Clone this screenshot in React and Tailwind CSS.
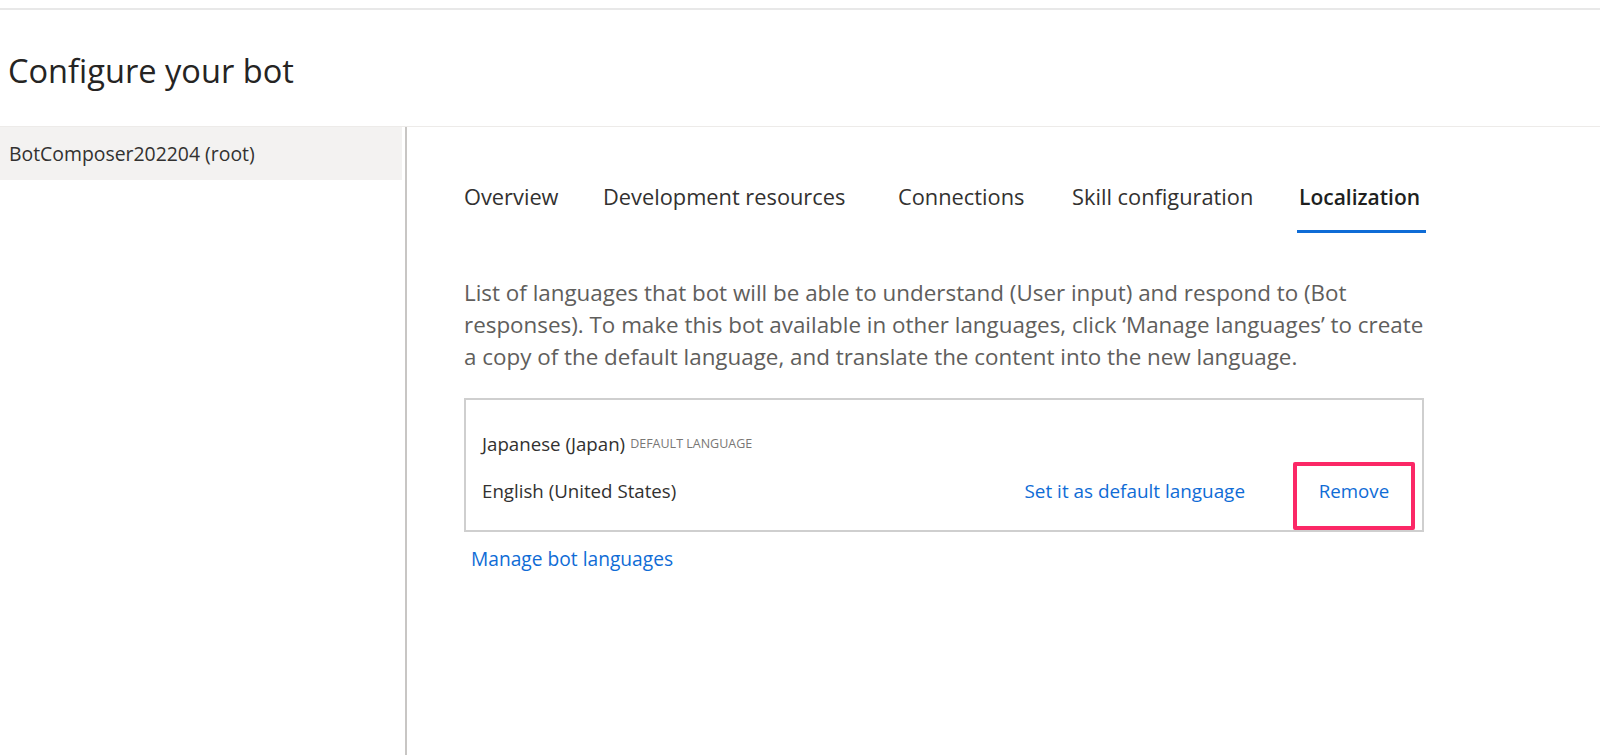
import React from 'react';

const tabs = [
    { label: 'Overview', w: 'w-[139px]' },
    { label: 'Development resources', w: 'w-[295px]' },
    { label: 'Connections', w: 'w-[174px]' },
    { label: 'Skill configuration', w: 'w-[227px]' },
    { label: 'Localization', w: 'w-[129px]', active: true },
];

const App = () => {
    return (
        <div className="h-[755px] w-full overflow-hidden bg-white font-['Open_Sans',sans-serif] text-[#323130]">
            <div className="h-[8px]" />
            {/* header */}
            <div className="flex h-[119px] items-center border-t-2 border-b border-t-[#e8e8e8] border-b-[#edebe9] px-[8px]">
                <h1 className="pt-[6px] text-[32.6px] font-medium text-[#252423]">Configure your bot</h1>
            </div>

            <div className="flex h-[628px]">
                {/* sidebar */}
                <div className="w-[407px] shrink-0 border-r-2 border-[#c8c6c4]">
                    <div className="mr-[3px] flex h-[53px] items-center bg-[#f3f2f1] px-[9px] text-[19.4px] text-[#323130]">
                        BotComposer202204 (root)
                    </div>
                </div>

                {/* main */}
                <div className="flex-1 pl-[57px] pt-[40px]">
                    <div className="flex h-[66px]">
                        {tabs.map((tab) => (
                            <div key={tab.label} className={`${tab.w} flex flex-col`}>
                                <div className={`h-[60px] whitespace-nowrap leading-[60px] ${tab.active ? 'text-[21px] font-semibold text-[#201f1e]' : 'text-[21.8px] text-[#323130]'}`}>
                                    {tab.label}
                                </div>
                                {tab.active && <div className="ml-[-2px] mt-[3px] h-[3px] w-[129px] bg-[#0f6cd6]" />}
                            </div>
                        ))}
                    </div>

                    <p className="mt-[44px] w-[962px] text-[22.4px] leading-[32px] text-[#605e5c]">
                        List of languages that bot will be able to understand (User input) and respond to (Bot responses). To make this bot available in other languages, click ‘Manage languages’ to create a copy of the default language, and translate the content into the new language.
                    </p>

                    <div className="mt-[25px] h-[134px] w-[960px] border-2 border-[#cfcfcf] pl-[16px] pr-[7px] pt-[26px]">
                        <div className="flex h-[36px] items-center text-[18.7px]">
                            <span>Japanese (Japan)</span>
                            <span className="ml-[5px] text-[12.5px] uppercase text-[#797775]">Default language</span>
                        </div>
                        <div className="flex h-[68px] items-start">
                            <span className="pt-[17px] text-[18.7px] leading-[24px]">English (United States)</span>
                            <span className="ml-auto pt-[17px] text-[18.9px] leading-[24px] text-[#0f6cd6]">Set it as default language</span>
                            <div className="ml-[48px] h-[68px] w-[122px] rounded-[2px] border-4 border-[#fb2866] pt-[13px] text-center text-[18.7px] leading-[24px] text-[#0f6cd6]">
                                Remove
                            </div>
                        </div>
                    </div>

                    <div className="ml-[7px] mt-[15px] text-[19.2px] leading-[24px] text-[#0f6cd6]">Manage bot languages</div>
                </div>
            </div>
        </div>
    );
};

export default App;
